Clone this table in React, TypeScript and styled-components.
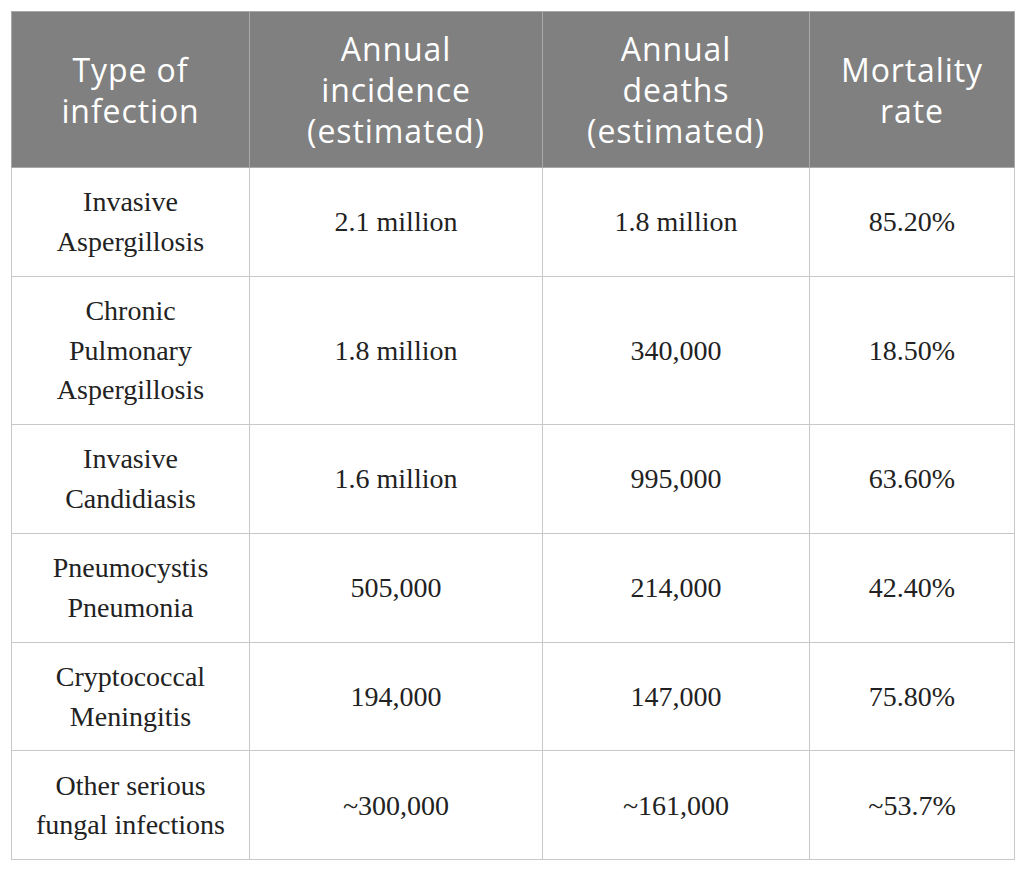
import React from "react";
import styled, { createGlobalStyle } from "styled-components";

const Global = createGlobalStyle`
  html, body { margin: 0; padding: 0; background: #ffffff; }
`;

const Page = styled.div`
  padding: 11px 0 0 11px;
`;

const Table = styled.table`
  border-collapse: collapse;
  table-layout: fixed;
  width: 1004px;
`;

const HeadCell = styled.th`
  background: #7f807f;
  color: #ffffff;
  font-family: "Open Sans", "DejaVu Sans", sans-serif;
  font-weight: 400;
  font-size: 32px;
  line-height: 41px;
  letter-spacing: 0.9px;
  text-align: center;
  vertical-align: middle;
  height: 123px;
  padding: 16px 4px 16px;
  border: 1px solid #a9a9a9;
`;

const Cell = styled.td`
  color: #222222;
  font-family: "Liberation Serif", "DejaVu Serif", serif;
  font-size: 28px;
  line-height: 39.5px;
  text-align: center;
  vertical-align: middle;
  padding: 14.4px 8px;
  border: 1px solid #c8c8c8;
`;

const rows: [string, string, string][] = [
  ["2.1 million", "1.8 million", "85.20%"],
  ["1.8 million", "340,000", "18.50%"],
  ["1.6 million", "995,000", "63.60%"],
  ["505,000", "214,000", "42.40%"],
  ["194,000", "147,000", "75.80%"],
  ["~300,000", "~161,000", "~53.7%"],
];

const firstCol: React.ReactNode[] = [
  <>Invasive<br />Aspergillosis</>,
  <>Chronic<br />Pulmonary<br />Aspergillosis</>,
  <>Invasive<br />Candidiasis</>,
  <>Pneumocystis<br />Pneumonia</>,
  <>Cryptococcal<br />Meningitis</>,
  <>Other serious<br />fungal infections</>,
];

export default function App() {
  return (
    <Page>
      <Global />
      <Table>
        <colgroup>
          <col style={{ width: 238 }} />
          <col style={{ width: 293 }} />
          <col style={{ width: 267 }} />
          <col style={{ width: 205 }} />
        </colgroup>
        <thead>
          <tr>
            <HeadCell>Type of<br />infection</HeadCell>
            <HeadCell>Annual<br />incidence<br />(estimated)</HeadCell>
            <HeadCell>Annual<br />deaths<br />(estimated)</HeadCell>
            <HeadCell>Mortality<br />rate</HeadCell>
          </tr>
        </thead>
        <tbody>
          {rows.map((r, i) => (
            <tr key={i}>
              <Cell>{firstCol[i]}</Cell>
              <Cell>{r[0]}</Cell>
              <Cell>{r[1]}</Cell>
              <Cell>{r[2]}</Cell>
            </tr>
          ))}
        </tbody>
      </Table>
    </Page>
  );
}
